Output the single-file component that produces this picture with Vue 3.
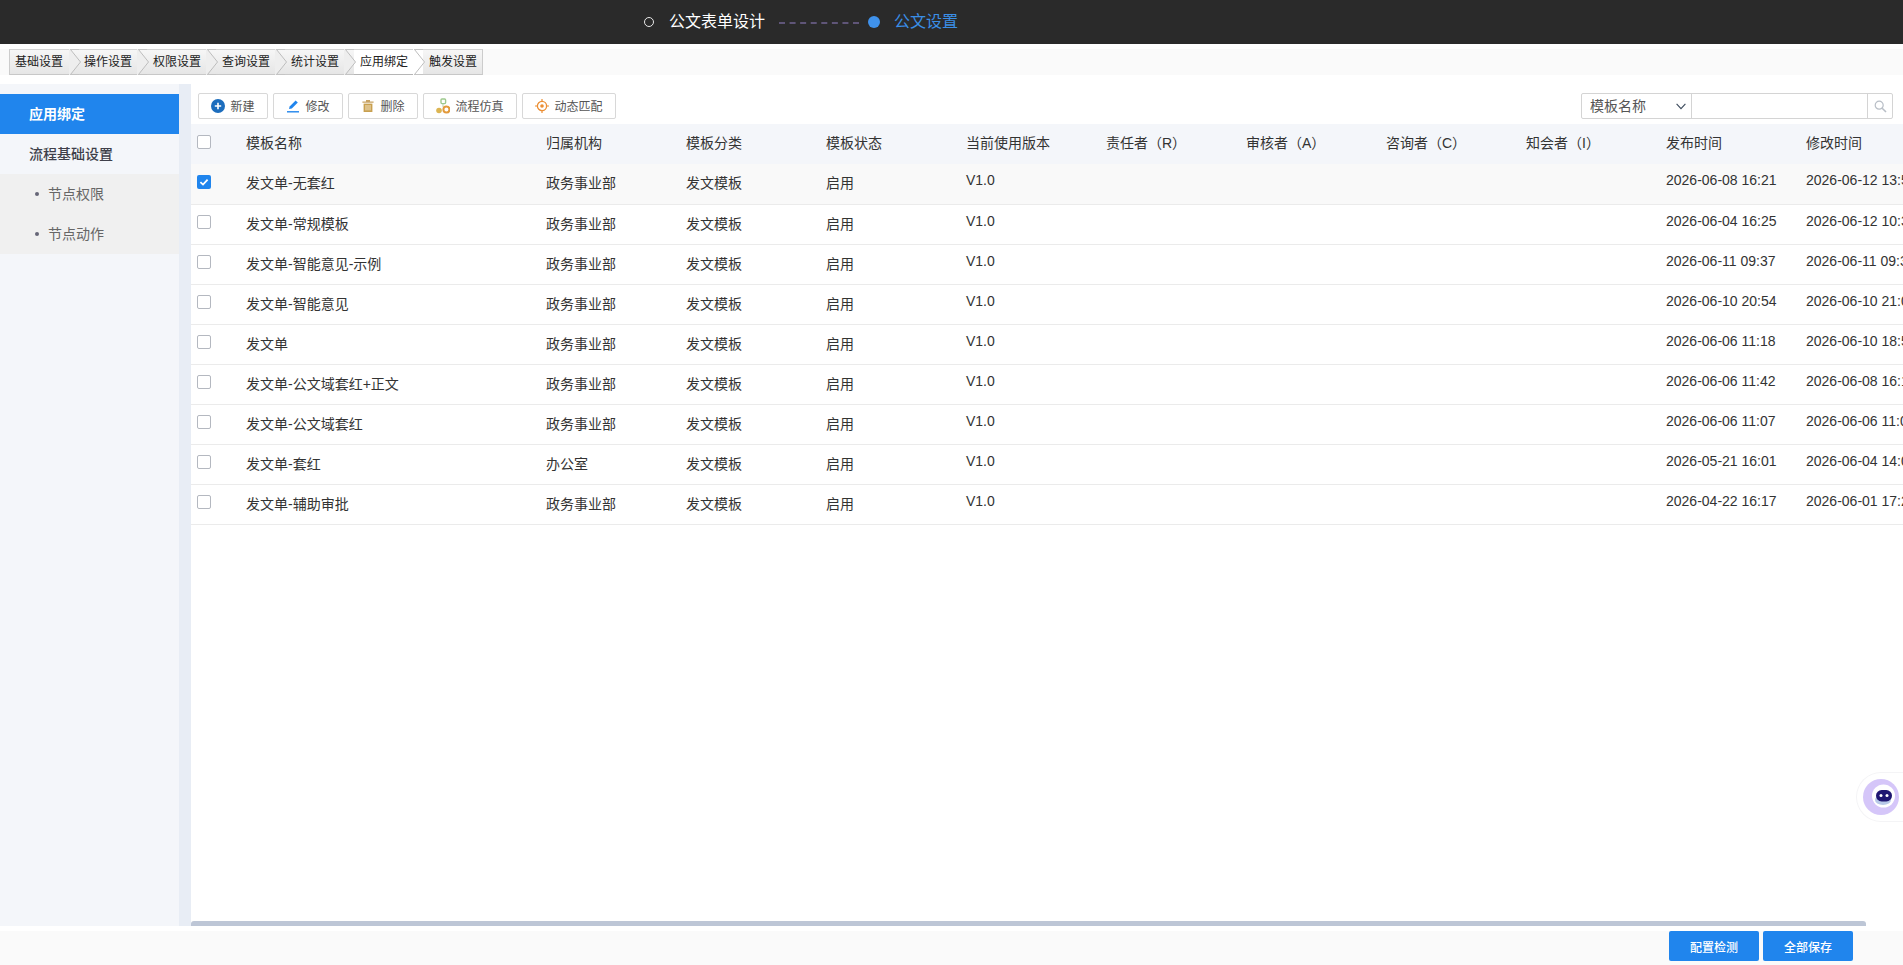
<script setup>
const tabs = ['基础设置', '操作设置', '权限设置', '查询设置', '统计设置', '应用绑定', '触发设置']
const columns = ['模板名称', '归属机构', '模板分类', '模板状态', '当前使用版本', '责任者（R）', '审核者（A）', '咨询者（C）', '知会者（I）', '发布时间', '修改时间']
const rows = [
  ['发文单-无套红', '政务事业部', '2026-06-08 16:21', '2026-06-12 13:58'],
  ['发文单-常规模板', '政务事业部', '2026-06-04 16:25', '2026-06-12 10:32'],
  ['发文单-智能意见-示例', '政务事业部', '2026-06-11 09:37', '2026-06-11 09:37'],
  ['发文单-智能意见', '政务事业部', '2026-06-10 20:54', '2026-06-10 21:03'],
  ['发文单', '政务事业部', '2026-06-06 11:18', '2026-06-10 18:52'],
  ['发文单-公文域套红+正文', '政务事业部', '2026-06-06 11:42', '2026-06-08 16:12'],
  ['发文单-公文域套红', '政务事业部', '2026-06-06 11:07', '2026-06-06 11:07'],
  ['发文单-套红', '办公室', '2026-05-21 16:01', '2026-06-04 14:03'],
  ['发文单-辅助审批', '政务事业部', '2026-04-22 16:17', '2026-06-01 17:20'],
]
</script>

<template>
  <div class="page">
    <header class="topbar">
      <span class="ring"></span>
      <span class="step">公文表单设计</span>
      <span class="dots"></span>
      <span class="dot"></span>
      <span class="step current">公文设置</span>
    </header>

    <nav class="tabs">
      <div
        v-for="(tab, i) in tabs"
        :key="tab"
        class="tab"
        :class="{ on: i === 5, last: i === tabs.length - 1 }"
      >
        <span>{{ tab }}</span>
        <svg v-if="i < tabs.length - 1" class="chev" width="12" height="26" viewBox="0 0 12 26">
          <path d="M0 0 L1 0 L11.5 13 L1 26 L0 26 Z" :fill="i === 5 ? '#fff' : '#eeeeee'" />
          <path d="M1.5 .5 L11.5 13 L1.5 25.5" fill="none" stroke="#bdbdbd" />
          <path d="M1 .5 H10 M1 25.5 H10" fill="none" stroke="#c4c4c4" />
        </svg>
      </div>
    </nav>

    <div class="body">
      <aside class="side">
        <div class="menu active">应用绑定</div>
        <div class="menu">流程基础设置</div>
        <div class="subs">
          <div class="sub"><i></i>节点权限</div>
          <div class="sub"><i></i>节点动作</div>
        </div>
      </aside>
      <div class="split"></div>
      <main class="main">
        <div class="toolbar">
          <button class="tool w70">
            <svg width="14" height="14" viewBox="0 0 14 14"><circle cx="7" cy="7" r="7" fill="#1c6dbd" /><path d="M7 3.8v6.4M3.8 7h6.4" stroke="#fff" stroke-width="1.6" /></svg>
            <span>新建</span>
          </button>
          <button class="tool w70">
            <svg width="14" height="14" viewBox="0 0 14 14"><path d="M3 10 L3.6 7.4 L9.6 1.4 L11.8 3.6 L5.8 9.6 Z" fill="#2085ed" /><path d="M1 12.8h12" stroke="#2085ed" stroke-width="1.4" /></svg>
            <span>修改</span>
          </button>
          <button class="tool w70">
            <svg width="14" height="14" viewBox="0 0 14 14"><path d="M5 1h4v1.4h3.6v1.4H1.4V2.4H5Z" fill="#c8a364" /><path d="M2.6 4.6h8.8V13H2.6Z" fill="#c8a050" /><path d="M5 6v5.4M7 6v5.4M9 6v5.4" stroke="#f3e3c3" /></svg>
            <span>删除</span>
          </button>
          <button class="tool w94">
            <svg width="14" height="16" viewBox="0 0 14 16"><rect x="5" y="1" width="4.6" height="4.6" rx="1" fill="none" stroke="#9dc98d" stroke-width="1.4" /><path d="M7 6v3" stroke="#b9d3a8" /><circle cx="3" cy="12.5" r="2.8" fill="#dcb552" /><circle cx="10.4" cy="11.5" r="3" fill="none" stroke="#e39a3c" stroke-width="2" /></svg>
            <span>流程仿真</span>
          </button>
          <button class="tool w94">
            <svg width="14" height="14" viewBox="0 0 14 14"><circle cx="7" cy="7" r="4.6" fill="none" stroke="#ec8f35" stroke-width="1.3" /><circle cx="7" cy="7" r="1.8" fill="#ec8f35" /><path d="M7 0v2.6M7 11.4V14M0 7h2.6M11.4 7H14" stroke="#ec8f35" stroke-width="1.2" /></svg>
            <span>动态匹配</span>
          </button>
          <div class="search">
            <div class="select">
              <span>模板名称</span>
              <svg width="10" height="7" viewBox="0 0 10 7"><path d="M.6.8 5 5.6 9.4.8" fill="none" stroke="#3c4a5c" stroke-width="1.1" /></svg>
            </div>
            <div class="input"></div>
            <div class="go">
              <svg width="13" height="13" viewBox="0 0 13 13"><circle cx="5.2" cy="5.2" r="4" fill="none" stroke="#b8bec6" stroke-width="1.2" /><path d="M8.2 8.2 12 12" stroke="#b8bec6" stroke-width="1.6" /></svg>
            </div>
          </div>
        </div>

        <table class="grid">
          <colgroup>
            <col class="c-check" />
            <col class="c-name" />
            <col v-for="n in 10" :key="n" class="c-std" />
          </colgroup>
          <thead>
            <tr>
              <th class="check"><span class="box"></span></th>
              <th v-for="c in columns" :key="c">{{ c }}</th>
            </tr>
          </thead>
          <tbody>
            <tr v-for="(row, i) in rows" :key="row[0]" :class="{ picked: i === 0 }">
              <td class="check">
                <span class="box" :class="{ ticked: i === 0 }">
                  <svg v-if="i === 0" width="14" height="14" viewBox="0 0 14 14"><path d="M3.4 7.2 6 9.6 10.6 4.6" fill="none" stroke="#fff" stroke-width="1.8" /></svg>
                </span>
              </td>
              <td>{{ row[0] }}</td>
              <td>{{ row[1] }}</td>
              <td>发文模板</td>
              <td>启用</td>
              <td class="latin">V1.0</td>
              <td></td>
              <td></td>
              <td></td>
              <td></td>
              <td class="latin">{{ row[2] }}</td>
              <td class="latin">{{ row[3] }}</td>
            </tr>
          </tbody>
        </table>

        <div class="scroll"></div>
      </main>
    </div>

    <footer class="foot">
      <button class="primary">配置检测</button>
      <button class="primary">全部保存</button>
    </footer>

    <div class="bot">
      <svg width="46" height="48" viewBox="0 0 46 48">
        <circle cx="24" cy="24" r="18" fill="#d5c6f9" />
        <circle cx="26.5" cy="23" r="11.5" fill="#fff" />
        <ellipse cx="26" cy="27" rx="8" ry="5" fill="#b7c8e8" />
        <rect x="19" y="17" width="16" height="11.5" rx="5.7" fill="#1f1672" />
        <circle cx="24" cy="22.5" r="1.5" fill="#fff" />
        <circle cx="30" cy="22.5" r="1.5" fill="#fff" />
      </svg>
    </div>
  </div>
</template>

<style scoped>
.page {
  position: relative;
  width: 1903px;
  height: 965px;
  overflow: hidden;
  background: #fff;
  font-family: "Liberation Sans", "Noto Sans CJK SC", sans-serif;
  font-size: 14px;
  color: #333;
  display: flex;
  flex-direction: column;
}
.topbar {
  height: 44px;
  flex: none;
  background: #2a2a2a;
  display: flex;
  align-items: center;
  padding-left: 644px;
  color: #fff;
}
.ring {
  width: 10px;
  height: 10px;
  box-sizing: border-box;
  border: 1.5px solid #e8e8e8;
  border-radius: 50%;
  margin-right: 15px;
}
.step { font-size: 16px; line-height: 24px; }
.step.current { color: #3a8ee6; margin-left: 14px; }
.dots {
  width: 80px;
  border-top: 2px dashed #5f5578;
  margin: 2px 9px 0 14px;
}
.dot {
  width: 12px;
  height: 12px;
  border-radius: 50%;
  background: #3f92ec;
}
.tabs {
  margin-top: 5px;
  height: 26px;
  flex: none;
  background: #fafafa;
  display: flex;
  padding-left: 9px;
}
.tab {
  position: relative;
  width: 69px;
  box-sizing: border-box;
  padding-left: 6px;
  font-size: 12px;
  line-height: 26px;
  color: #222;
  background: linear-gradient(#f6f6f6, #e6e6e6);
  border-top: 1px solid #d4d4d4;
  border-bottom: 1px solid #c8c8c8;
}
.tab span { position: relative; top: -1px; }
.tab:first-child { border-left: 1px solid #ccc; padding-left: 5px; }
.tab.on { background: #fff; border-bottom-color: #b5b5b5; }
.tab.last { width: 60px; border-right: 1px solid #ccc; }
.chev {
  position: absolute;
  top: -1px;
  left: 59px;
  z-index: 2;
}
.body {
  margin-top: 9px;
  height: 842px;
  flex: none;
  display: flex;
}
.side {
  width: 179px;
  flex: none;
  background: #f4f6fa;
  padding-top: 10px;
  box-sizing: border-box;
}
.menu {
  height: 40px;
  line-height: 40px;
  padding-left: 29px;
  font-weight: 500;
  color: #3f3f4a;
}
.menu.active {
  background: #2085ed;
  color: #fff;
  font-weight: 700;
}
.subs { background: #f0f0f0; }
.sub {
  height: 40px;
  line-height: 40px;
  padding-left: 35px;
  color: #666;
  display: flex;
  align-items: center;
}
.sub i {
  width: 4px;
  height: 4px;
  border-radius: 50%;
  background: #667;
  margin-right: 9px;
}
.split { width: 12px; flex: none; background: #e8edf5; }
.main {
  flex: 1;
  min-width: 0;
  position: relative;
  overflow: hidden;
}
.toolbar {
  height: 40px;
  display: flex;
  gap: 5px;
  padding: 9px 10px 0 7px;
  box-sizing: border-box;
}
.tool {
  height: 26px;
  box-sizing: border-box;
  border: 1px solid #d8d8d8;
  border-radius: 2px;
  background: #fff;
  color: #555;
  font: inherit;
  font-size: 12px;
  display: flex;
  align-items: center;
  justify-content: center;
  gap: 5px;
  padding: 0;
}
.tool span { margin-bottom: 2px; }
.w70 { width: 70px; }
.w94 { width: 94px; }
.search {
  margin-left: auto;
  width: 312px;
  height: 26px;
  box-sizing: border-box;
  border: 1px solid #d4d4d4;
  border-radius: 2px;
  display: flex;
}
.select {
  width: 110px;
  box-sizing: border-box;
  border-right: 1px solid #d4d4d4;
  display: flex;
  align-items: center;
  justify-content: space-between;
  padding: 0 5px 0 8px;
  color: #555;
  font-size: 14px;
}
.select span { margin-bottom: 3px; }
.input { flex: 1; }
.go {
  width: 24px;
  border-left: 1px solid #d4d4d4;
  display: flex;
  align-items: center;
  justify-content: center;
}
.grid {
  table-layout: fixed;
  border-collapse: collapse;
  width: 1745px;
}
.c-check { width: 45px; }
.c-name { width: 300px; }
.c-std { width: 140px; }
.grid th {
  box-sizing: border-box;
  height: 40px;
  background: #f4f6fa;
  text-align: left;
  font-weight: 400;
  padding: 0 0 4px 10px;
  color: #333;
  white-space: nowrap;
}
.grid td {
  box-sizing: border-box;
  height: 40px;
  padding: 0 0 3px 10px;
  border-bottom: 1px solid #ebebeb;
  color: #333;
  white-space: nowrap;
}
.grid td.latin { padding-bottom: 7px; }
.picked td { background: #f9f9f9; }
.grid .check { padding: 0 0 4px 6px; }
.box {
  display: block;
  width: 14px;
  height: 14px;
  box-sizing: border-box;
  border: 1px solid #b4b8c0;
  border-radius: 2px;
  background: #fff;
}
.box.ticked {
  background: #2085ed;
  border: 0;
}
.box svg { display: block; }
.scroll {
  position: absolute;
  left: 0;
  bottom: 0;
  width: 1675px;
  height: 5px;
  background: #bdc6d6;
  border-radius: 3px 3px 0 0;
}
.foot {
  margin-top: 5px;
  height: 34px;
  flex: none;
  background: #fafafa;
  display: flex;
  justify-content: flex-end;
  align-items: flex-start;
  gap: 4px;
  padding-right: 50px;
}
.primary {
  width: 90px;
  height: 30px;
  border: 0;
  border-radius: 2px;
  background: #2085ed;
  color: #fff;
  font: inherit;
  font-size: 12px;
  font-weight: 500;
  padding: 0;
}
.bot {
  position: absolute;
  right: 0;
  top: 773px;
  width: 46px;
  height: 48px;
  box-sizing: border-box;
  border-radius: 24px 0 0 24px;
  background: #fff;
  box-shadow: 0 0 0 1px #f4f4f6;
}
.bot svg { display: block; }
</style>

<style>
html, body { margin: 0; padding: 0; }
</style>
